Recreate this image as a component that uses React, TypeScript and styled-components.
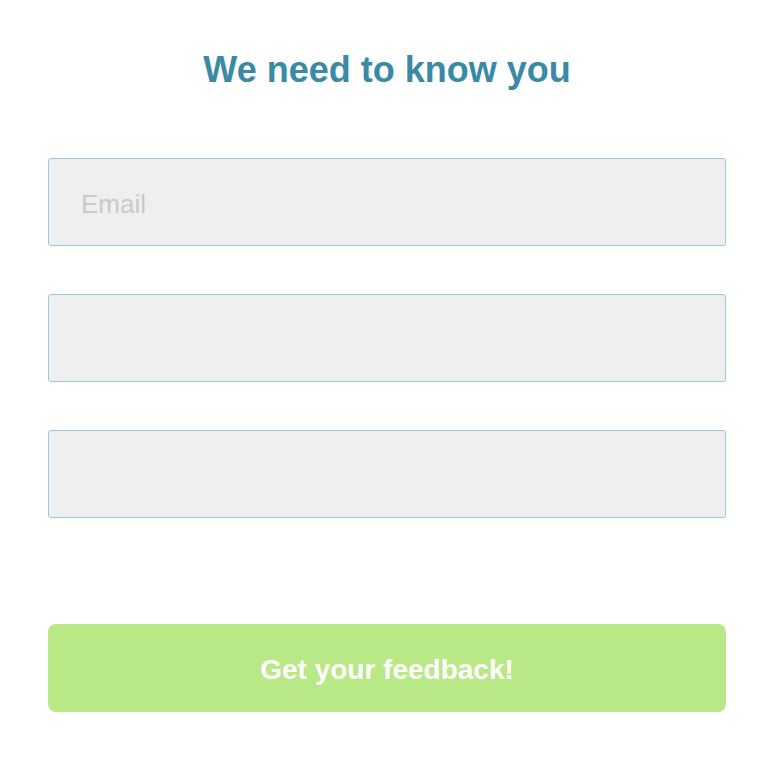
import React from "react";
import styled, { createGlobalStyle } from "styled-components";

const Global = createGlobalStyle`
  html, body { margin: 0; padding: 0; background: #ffffff; }
  body { font-family: "Liberation Sans", Arial, Helvetica, sans-serif; }
  * { box-sizing: border-box; }
`;

const Page = styled.div`
  width: 772px;
  padding: 49px 46px 0 48px;
  display: flex;
  flex-direction: column;
`;

const Title = styled.h1`
  margin: 0;
  text-align: center;
  font-size: 36px;
  line-height: 42px;
  font-weight: 700;
  color: #3a89a5;
`;

const Form = styled.form`
  margin-top: 67px;
  display: flex;
  flex-direction: column;
  gap: 48px;
`;

const Field = styled.input`
  display: block;
  width: 100%;
  height: 88px;
  border: 1px solid #9ac7dc;
  border-radius: 3px;
  background: #efefef;
  padding: 4px 32px 0;
  font-family: "Liberation Sans", Arial, sans-serif;
  font-size: 26px;
  color: #555;
  outline: none;
  &::placeholder { color: #c9c9c9; }
`;

const Submit = styled.button`
  margin-top: 58px;
  width: 100%;
  height: 88px;
  border: none;
  border-radius: 8px;
  background: #b9e887;
  color: #ffffff;
  padding: 3px 0 0;
  font-family: "Liberation Sans", Arial, sans-serif;
  font-size: 28px;
  font-weight: 700;
  cursor: pointer;
`;

export default function App() {
  return (
    <>
      <Global />
      <Page>
        <Title>We need to know you</Title>
        <Form onSubmit={(e) => e.preventDefault()}>
          <Field type="email" placeholder="Email" />
          <Field type="text" />
          <Field type="text" />
          <Submit type="submit">Get your feedback!</Submit>
        </Form>
      </Page>
    </>
  );
}
